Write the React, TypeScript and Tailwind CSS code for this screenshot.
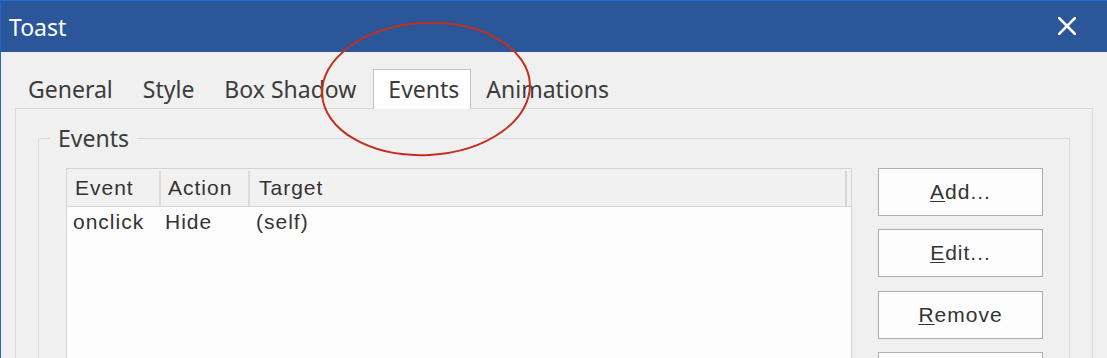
import React from "react";

const tabs = ["General", "Style", "Box Shadow", "Events", "Animations"];

function ListButton({ label }: { label: string }) {
  return (
    <button
      type="button"
      className="h-[48px] w-[165px] border border-[#adadad] bg-[#fdfdfd] text-[21px] tracking-[1px] text-[#333]"
    >
      {label && (
        <>
          <u className="underline decoration-1 underline-offset-[2px]">{label[0]}</u>
          {label.slice(1)}
        </>
      )}
    </button>
  );
}

export default function App() {
  return (
    <div
      className="relative h-[358px] w-[1107px] overflow-hidden border-l border-[#2a63bd] bg-[#f0f0f0]"
      style={{ fontFamily: '"Noto Sans", sans-serif' }}
    >
      {/* Title bar */}
      <div className="flex h-[52px] items-center justify-between border-t border-[#1c6fd8] bg-[#2b579a] pl-[8px] pr-[31px] pt-[2px]">
        <span className="text-[23px] text-white">Toast</span>
        <svg width="18" height="18" viewBox="0 0 18 18" className="mb-[3px]">
          <path
            d="M1 1 L17 17 M17 1 L1 17"
            stroke="#fff"
            strokeWidth="2.6"
            strokeLinecap="square"
          />
        </svg>
      </div>

      {/* Tabs */}
      <div className="flex h-[56px] items-end pl-[12px]">
        {tabs.map((t) =>
          t === "Events" ? (
            <div
              key={t}
              className="relative z-10 -mb-px ml-[2px] flex h-[40px] items-center border border-b-0 border-[#c4c4c4] bg-white pl-[14px] pr-[11px] text-[23px] text-[#3c3c3c]"
            >
              {t}
            </div>
          ) : (
            <div
              key={t}
              className="flex h-[38px] items-center px-[15px] text-[23px] text-[#3c3c3c]"
            >
              {t}
            </div>
          )
        )}
      </div>

      {/* Tab panel */}
      <div className="mx-[14px] h-[300px] border border-b-0 border-[#d9d9d9] px-[22px]">
        <fieldset className="mt-[14px] h-[300px] rounded-tl-[3px] border border-[#dadada] p-0">
          <legend className="ml-[11px] px-[8px] text-[23px] leading-[30px] text-[#3c3c3c]">
            Events
          </legend>
          <div
            className="flex gap-[26px] pl-[27px] pt-[15px]"
            style={{ fontFamily: '"Liberation Sans", Arial, sans-serif' }}
          >
            {/* List view */}
            <div className="h-[240px] w-[786px] border border-[#d4d4d4] bg-[#fdfdfd] text-[21px] tracking-[1px] text-[#333]">
              <div className="flex h-[38px] items-center border-b border-[#d6d6d6] bg-[#f1f1f1] pt-[2px]">
                <div className="h-full w-[94px] border-r-2 border-[#dcdcdc] pl-[8px] leading-[34px]">
                  Event
                </div>
                <div className="h-full w-[89px] border-r-2 border-[#dcdcdc] pl-[7px] leading-[34px]">
                  Action
                </div>
                <div className="h-full w-[597px] border-r-2 border-[#d4d4d4] pl-[9px] leading-[34px]">
                  Target
                </div>
              </div>
              <div className="flex h-[28px] pt-[2px] leading-[26px]">
                <div className="w-[93px] pl-[6px]">onclick</div>
                <div className="w-[90px] pl-[5px]">Hide</div>
                <div className="pl-[6px]">(self)</div>
              </div>
            </div>

            {/* Buttons */}
            <div className="flex flex-col gap-[13px]">
              <ListButton label="Add..." />
              <ListButton label="Edit..." />
              <div className="mt-[1px]">
                <ListButton label="Remove" />
              </div>
              <ListButton label="" />
            </div>
          </div>
        </fieldset>
      </div>

      {/* Annotation circle */}
      <svg
        className="pointer-events-none absolute left-0 top-0"
        width="1107"
        height="358"
      >
        <ellipse
          cx="425"
          cy="89"
          rx="104"
          ry="66"
          fill="none"
          stroke="#c1301f"
          strokeWidth="2"
          transform="rotate(-3 425 89)"
        />
      </svg>
    </div>
  );
}
